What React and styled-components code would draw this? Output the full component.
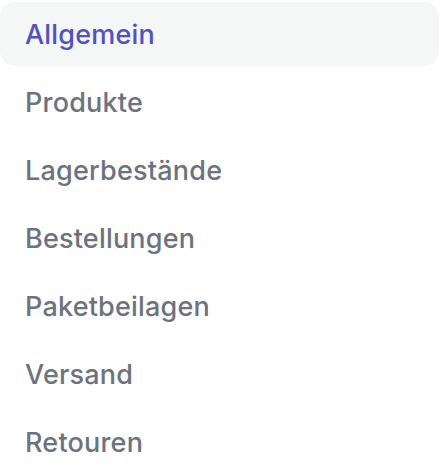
import styled, { createGlobalStyle } from "styled-components";

const items = [
  "Allgemein",
  "Produkte",
  "Lagerbestände",
  "Bestellungen",
  "Paketbeilagen",
  "Versand",
  "Retouren",
];

const GlobalStyle = createGlobalStyle`
  body {
    margin: 0;
    background: #ffffff;
    font-family: Inter, "Noto Sans", sans-serif;
  }
`;

const App = () => {
  return (
    <>
      <GlobalStyle />
      <Nav>
        {items.map((label, i) => (
          <Item key={label} $active={i === 0}>
            {label}
          </Item>
        ))}
      </Nav>
    </>
  );
};

const Nav = styled.nav`
  width: 439px;
  padding-top: 2px;
  display: flex;
  flex-direction: column;
  gap: 4px;
`;

const Item = styled.a`
  height: 64px;
  display: flex;
  align-items: center;
  padding: 0 25px;
  border-radius: 15px;
  font-size: 27px;
  font-weight: 500;
  letter-spacing: 0.2px;
  text-decoration: none;
  cursor: pointer;
  color: ${(p) => (p.$active ? "#4f51c5" : "#6b7280")};
  background: ${(p) => (p.$active ? "#f5f6f6" : "transparent")};
`;

export default App;
